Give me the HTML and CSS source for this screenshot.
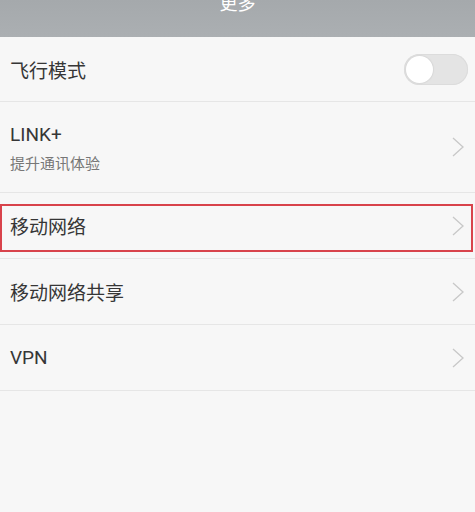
FILE: index.html
```html
<!DOCTYPE html>
<html lang="zh-CN">
<head>
    <meta charset="UTF-8">
    <title>更多</title>
    <link rel="stylesheet" href="styles.css">
</head>
<body>
    <div class="wrap">
        <!-- 상단 타이틀 -->
        <div class="header">
            <h1 class="title">更多</h1>
        </div>
        <!-- 설정 목록 -->
        <ul class="list">
            <li class="item">
                <span class="label">飞行模式</span>
                <span class="switch"><span class="knob"></span></span>
            </li>
            <li class="item item_tall">
                <div class="text">
                    <span class="label">LINK+</span>
                    <span class="sub">提升通讯体验</span>
                </div>
                <svg class="arrow" width="12" height="20" viewBox="0 0 12 20"><polyline points="1,1 11,10 1,19" fill="none" stroke="#c8c8c8" stroke-width="1.3"/></svg>
            </li>
            <li class="item on">
                <span class="label">移动网络</span>
                <svg class="arrow" width="12" height="20" viewBox="0 0 12 20"><polyline points="1,1 11,10 1,19" fill="none" stroke="#c8c8c8" stroke-width="1.3"/></svg>
                <span class="mark"></span>
            </li>
            <li class="item">
                <span class="label">移动网络共享</span>
                <svg class="arrow" width="12" height="20" viewBox="0 0 12 20"><polyline points="1,1 11,10 1,19" fill="none" stroke="#c8c8c8" stroke-width="1.3"/></svg>
            </li>
            <li class="item">
                <span class="label">VPN</span>
                <svg class="arrow" width="12" height="20" viewBox="0 0 12 20"><polyline points="1,1 11,10 1,19" fill="none" stroke="#c8c8c8" stroke-width="1.3"/></svg>
            </li>
        </ul>
    </div>
</body>
</html>
```

FILE: styles.css
```css
html, body, div, span,
h1, h2, h3, h4, h5, h6, p,
ul, li{
    margin: 0;
    padding: 0;
    border: 0;
}
html,body{
    height: 100%;
}
ul {
    list-style: none;
}
body{
    font-family: Roboto, "Noto Sans CJK SC", sans-serif;
    color: #363636;
    background-color: #f7f7f7;
}
.wrap{
    height: 100%;
    background-color: #f7f7f7;
}
.header{
    overflow: hidden;
    height: 37px;
    background: linear-gradient(#a5a9ac, #abafb2);
}
.title{
    margin-top: -7px;
    font-size: 18px;
    line-height: 22px;
    font-weight: normal;
    color: #fff;
    text-align: center;
}
.item{
    position: relative;
    display: flex;
    align-items: center;
    justify-content: space-between;
    height: 65px;
    padding: 0 11px 0 10px;
    border-bottom: 1px solid #e6e6e6;
}
.item:first-child{
    height: 64px;
    padding-right: 7px;
}
.item_tall{
    height: 90px;
}
.label{
    font-size: 19px;
    color: #363636;
}
.text{
    display: flex;
    flex-direction: column;
    gap: 6px;
    padding-top: 2px;
}
.sub{
    font-size: 15px;
    color: #777;
}
.switch{
    position: relative;
    width: 64px;
    height: 31px;
    border-radius: 16px;
    background-color: #e4e4e4;
    box-shadow: inset 0 0 0 1px #dcdcdc;
}
.knob{
    position: absolute;
    top: 2px;
    left: 2px;
    width: 27px;
    height: 27px;
    border-radius: 50%;
    background-color: #fff;
    box-shadow: 0 0 1px 1px #d8d8d8;
}
.mark{
    position: absolute;
    top: 11px;
    left: 0;
    right: 2px;
    height: 48px;
    border: 2px solid #d8434b;
    box-sizing: border-box;
}
```
